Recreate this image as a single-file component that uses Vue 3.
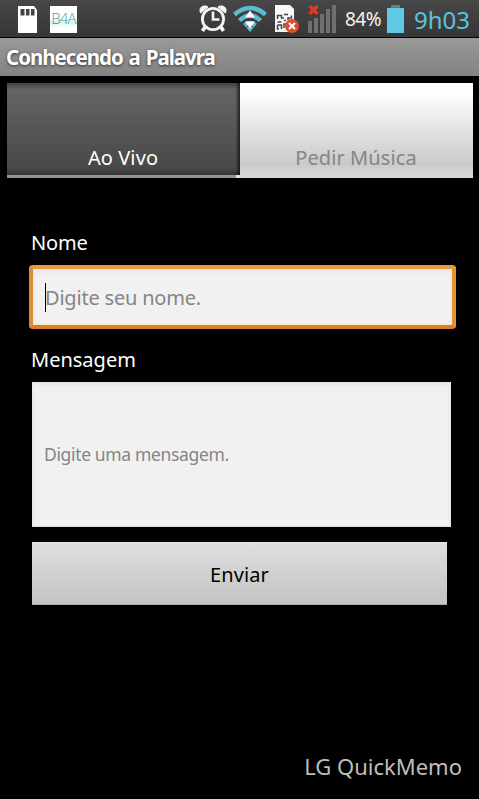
<script setup>
import { ref } from 'vue'

const title = 'Conhecendo a Palavra'
const tabs = ['Ao Vivo', 'Pedir Música']
const active = ref(0)
const bars = [12, 15, 19, 24, 28]
</script>

<template>
  <div class="screen">
    <header class="status">
      <svg class="sd" width="20" height="28" viewBox="0 0 20 28">
        <path d="M0 0H16L19 4V27H0Z" fill="#fff" />
        <path d="M2.500 3h4v6.500h-4zM8 3h3.500v6.500H8zM13 3H16.500v6.500H13z" fill="#444" />
      </svg>
      <div class="b4a"><span>B4A</span></div>
      <svg class="alarm" width="28" height="28" viewBox="0 0 28 28" fill="none" stroke="#f4f4f4">
        <path d="M1.500 8Q-.5 2.500 4.500 1Q7.500 .5 9 2ZM26.500 8Q28.500 2.500 23.500 1Q20.500 .5 19 2Z" fill="#f4f4f4" stroke-width="1" />
        <circle cx="14" cy="14" r="10.600" stroke-width="2.800" />
        <path d="M14 6.500V14.500H20.500" stroke-width="2.600" />
        <path d="M6 22L3.500 26M22 22L24.500 26" stroke-width="3.600" />
      </svg>
      <svg class="wifi" width="34" height="28" viewBox="0 0 34 28">
        <g fill="none" stroke="#5abdd5" stroke-width="4.400">
          <path d="M1.500 9.500Q17-3.500 32.500 9.500" />
          <path d="M6.500 15.500Q17 5.500 27.500 15.500" />
          <path d="M11.500 20.500Q17 15.500 22.500 20.500" />
        </g>
        <path d="M13 22H21L17 27Z" fill="#5abdd5" />
        <path d="M17 5.500L22 12.500H12ZM17 23.500L12 16.500H22Z" fill="#fff" />
      </svg>
      <svg class="sim" width="26" height="29" viewBox="0 0 26 29">
        <path d="M1 0H16L20 4V27H1Z" fill="#f8f8f8" />
        <path d="M3.500 14V10.500H7.500V13H10M10 9.500H14M17.500 10.500V13H14V15M3.500 17H7.500M10 15.500H12M14 17H18M3.500 20H7.500V24M3.500 20V24H5M10 23V19H12" fill="none" stroke="#444" stroke-width="1.500" />
        <circle cx="18" cy="21" r="7" fill="#e24a2c" />
        <path d="M15 18L21 24M21 18L15 24" stroke="#fff" stroke-width="2" />
      </svg>
      <div class="signal">
        <i v-for="h in bars" :key="h" :style="{ height: h + 'px' }"></i>
        <svg class="cross" width="11" height="10" viewBox="0 0 11 10">
          <path d="M1.500 1L9.500 9M9.500 1L1.500 9" stroke="#e33b1e" stroke-width="3.200" />
        </svg>
      </div>
      <span class="percent">84%</span>
      <div class="battery"></div>
      <span class="clock">9h03</span>
    </header>

    <h1 class="title"><span>{{ title }}</span></h1>

    <nav class="tabs">
      <button v-for="(t, i) in tabs" :key="t" class="tab" :class="{ active: i === active }" @click="active = i">
        <span>{{ t }}</span>
      </button>
    </nav>

    <main class="form">
      <label class="label nome">Nome</label>
      <div class="field focused"><i class="caret"></i><span class="hint-name">Digite seu nome.</span></div>
      <label class="label msg">Mensagem</label>
      <div class="field area"><span class="hint-msg">Digite uma mensagem.</span></div>
      <button class="send"><span>Enviar</span></button>
    </main>

    <footer class="memo"><span>LG QuickMemo</span></footer>
  </div>
</template>

<style>
body { background: #000; }
</style>

<style scoped>
.screen {
  width: 479px;
  height: 799px;
  box-sizing: border-box;
  overflow: hidden;
  background: #000;
  color: #fff;
  font-family: "Noto Sans", "Open Sans", sans-serif;
  font-size: 20px;
  display: flex;
  flex-direction: column;
}
span { white-space: nowrap; }
button { font: inherit; border: 0; margin: 0; padding: 0; }
.status {
  height: 37px;
  flex: none;
  display: flex;
  align-items: flex-start;
  background: linear-gradient(#474747, #363636);
  border-bottom: 1px solid #000;
}
.status > * { flex: none; }
.sd { margin: 6px 0 0 18px; }
.b4a {
  width: 27px;
  height: 27px;
  margin: 6px 0 0 12px;
  background: linear-gradient(#fff 45%, #d8f1f0 62%, #fff 80%);
  color: #2f9f9f;
  font: 300 15px/25px "Open Sans", sans-serif;
  letter-spacing: -0.9px;
  text-align: center;
}
.alarm { margin: 5px 0 0 122px; }
.wifi { margin: 5px 0 0 6px; }
.sim { margin: 5px 0 0 7px; }
.signal {
  position: relative;
  width: 29px;
  height: 33px;
  margin-left: 8px;
  display: flex;
  align-items: flex-end;
  gap: 2px;
}
.signal i { width: 4px; background: #6f6f6f; }
.cross { position: absolute; left: 0; top: 5px; }
.percent { width: 42px; margin: 6px 0 0 8px; font-size: 19px; line-height: 26px; letter-spacing: -0.5px; color: #f4f4f4; }
.battery {
  width: 17px;
  height: 28px;
  margin-top: 5px;
  background: linear-gradient(#777, #777) center top / 9px 3px no-repeat, linear-gradient(#5ec8e5, #5ec8e5) 0 3px / 17px 25px no-repeat;
}
.clock { margin: 4px 0 0 10px; font-size: 24px; line-height: 31px; color: #5bc3dd; }
.title {
  height: 38px;
  flex: none;
  margin: 0;
  padding-left: 6px;
  background: linear-gradient(#999, #838383);
  font-size: 20.5px;
  line-height: 39px;
  font-weight: 700;
  letter-spacing: -1px;
  word-spacing: 1.5px;
  text-shadow: 0 1px 3px #333;
}
.tabs { display: flex; margin: 7px 6px 0 7px; height: 95px; flex: none; }
.tab {
  flex: 1;
  display: flex;
  align-items: flex-end;
  justify-content: center;
  padding-bottom: 7px;
  padding-right: 1px;
  color: #858585;
  background: linear-gradient(#fff 10%, #cacaca 85%, #d8d8d8);
  line-height: 26px;
  letter-spacing: 0.1px;
}
.tab.active {
  color: #fff;
  background:
    linear-gradient(#e4e4e4, #e4e4e4) right bottom / 4px 3px no-repeat,
    linear-gradient(#949494, #949494) left bottom / 100% 3px no-repeat,
    linear-gradient(90deg, transparent 98%, rgba(0, 0, 0, .65)),
    linear-gradient(#404040, #646464 7%, #484848 90%, #333 97%);
}
.form { display: flex; flex-direction: column; padding: 53px 23px 0 29px; }
.label { line-height: 24px; padding-left: 2px; }
.nome { letter-spacing: -0.2px; }
.field { display: flex; align-items: center; box-sizing: border-box; color: #858585; background: #f1f1f1; }
.focused {
  height: 64px;
  width: 427px;
  margin-top: 10px;
  padding-left: 12px;
  border: 4px solid;
  border-color: #e89a44 #e8922f #d6802f #dd8b38;
  border-radius: 4px;
  box-shadow: inset 0 1px 1px #fbe3bd, inset 0 -1px 1px #fbe3bd, inset 0 3px 4px #e6e6e6;
}
.hint-name { margin-left: -1px; letter-spacing: -0.2px; }
.caret { width: 1px; height: 29px; background: #000; }
.msg { margin-top: 19px; }
.area { height: 145px; width: 419px; margin: 10px 0 0 3px; padding-left: 12px; box-shadow: inset 0 2px 4px #e0e0e0, inset 0 -1px #ddd; }
.hint-msg { font-size: 17.5px; letter-spacing: -0.35px; margin-top: -1px; }
.send {
  width: 415px;
  height: 63px;
  margin: 15px 0 0 3px;
  padding-top: 2px;
  color: #000;
  background: linear-gradient(#dfdfdf, #c3c3c3);
  box-shadow: inset 0 1px #e8e8e8, inset 0 -1px #aaa;
  letter-spacing: 0.1px;
}
.memo { margin-top: auto; padding: 0 17px 18px 0; text-align: right; color: #bdbdbd; font-size: 22px; line-height: 30px; }
</style>
